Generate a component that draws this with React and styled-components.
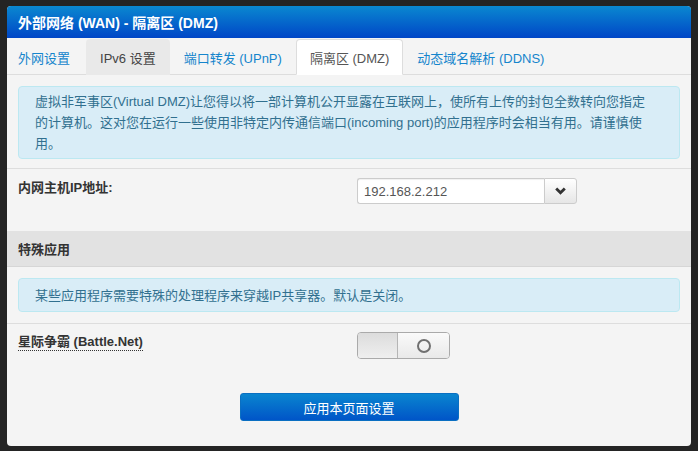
import React from "react";
import styled, { createGlobalStyle } from "styled-components";

const GlobalStyle = createGlobalStyle`
  html, body {
    margin: 0;
    padding: 0;
    background: #242424;
    font-family: "Liberation Sans", "Noto Sans CJK SC", sans-serif;
    font-size: 13px;
    color: #333;
  }
`;

const Page = styled.div`
  padding: 6px 7px 5px 7px;
`;

const Panel = styled.div`
  width: 684px;
  height: 440px;
  background: #f4f4f4;
  border-radius: 4px;
  overflow: hidden;
  display: flex;
  flex-direction: column;
`;

const Header = styled.div`
  height: 32px;
  display: flex;
  align-items: center;
  padding: 0 11px;
  background: linear-gradient(to bottom, #0a88d0, #0046c7);
  color: #fff;
  font-size: 14px;
  font-weight: bold;
`;

const TabBar = styled.div`
  display: flex;
  height: 36px;
  padding-left: 11px;
  border-bottom: 1px solid #ddd;
`;

const Tab = styled.div`
  display: flex;
  align-items: center;
  padding: 0 ${(p) => (p.$first ? "15px 0 0" : "13px")};
  margin-top: 1px;
  margin-bottom: -1px;
  border: 1px solid ${(p) => (p.$active ? "#ddd" : "transparent")};
  border-bottom-color: ${(p) => (p.$active ? "#fff" : "transparent")};
  border-left-width: ${(p) => (p.$first ? "0" : "1px")};
  border-radius: 4px 4px 0 0;
  background: ${(p) => (p.$active ? "#fff" : p.$hover ? "#e9e9e9" : "transparent")};
  color: ${(p) => (p.$active ? "#555" : p.$hover ? "#444" : "#1585cc")};
  font-size: 13px;
`;

const Section = styled.div`
  padding: ${(p) => p.$pad || "0 11px"};
  border-top: ${(p) => (p.$line ? "1px solid #ddd" : "none")};
`;

const Info = styled.div`
  background: #d9edf7;
  border: 1px solid #bce8f1;
  border-radius: 4px;
  color: #31708f;
  padding: ${(p) => p.$pad || "4px 30px 4px 16px"};
  line-height: 21px;
  font-size: 13px;
`;

const Row = styled.div`
  display: grid;
  grid-template-columns: 339px 1fr;
  align-items: start;
  padding: ${(p) => p.$pad};
`;

const Label = styled.div`
  font-weight: bold;
  font-size: 13px;
  line-height: 20px;
  color: #333;
`;

const Dotted = styled.span`
  border-bottom: 1px dotted #333;
  padding-bottom: 1px;
`;

const Combo = styled.div`
  display: flex;
  width: 220px;
  height: 26px;
`;

const Input = styled.div`
  flex: 1;
  background: #fff;
  border: 1px solid #ccc;
  border-right: none;
  border-radius: 3px 0 0 3px;
  display: flex;
  align-items: center;
  padding-left: 6px;
  color: #555;
  font-size: 13px;
  box-shadow: inset 0 1px 1px rgba(0, 0, 0, 0.06);
`;

const DropBtn = styled.div`
  width: 31px;
  border: 1px solid #ccc;
  border-radius: 0 3px 3px 0;
  background: linear-gradient(to bottom, #fff, #e6e6e6);
  display: flex;
  align-items: center;
  justify-content: center;
`;

const GroupHead = styled.div`
  height: 35px;
  display: flex;
  align-items: center;
  padding: 0 11px;
  background: #e2e2e2;
  border-bottom: 1px solid #d6d6d6;
  font-weight: bold;
  font-size: 13px;
`;

const Toggle = styled.div`
  display: flex;
  width: 93px;
  height: 27px;
  box-sizing: border-box;
  border: 1px solid #aaa;
  border-radius: 4px;
  overflow: hidden;
`;

const ToggleOff = styled.div`
  width: 39px;
  background: linear-gradient(to bottom, #dcdcdc, #efefef);
  border-right: 1px solid #b5b5b5;
`;

const ToggleOn = styled.div`
  flex: 1;
  background: linear-gradient(to bottom, #fafafa, #e9e9e9);
  display: flex;
  align-items: center;
  justify-content: center;
`;

const Ring = styled.div`
  width: 10px;
  height: 10px;
  border: 2px solid #707070;
  border-radius: 50%;
`;

const Footer = styled.div`
  display: flex;
  justify-content: center;
  padding: 34px 0 0 0;
`;

const Apply = styled.button`
  width: 219px;
  height: 28px;
  border: 1px solid #0a6fc2;
  border-radius: 3px;
  background: linear-gradient(to bottom, #0a85cf, #0055c8);
  color: #fff;
  font-family: inherit;
  font-size: 13px;
  padding: 0;
`;

const Chevron = () => (
  <svg width="11" height="8" viewBox="0 0 11 8">
    <path d="M1.2 1.5 L5.5 5.8 L9.8 1.5" fill="none" stroke="#333" strokeWidth="2.8" />
  </svg>
);

export default function App() {
  return (
    <>
      <GlobalStyle />
      <Page>
        <Panel>
          <Header>外部网络 (WAN) - 隔离区 (DMZ)</Header>
          <TabBar>
            <Tab $first>外网设置</Tab>
            <Tab $hover>IPv6 设置</Tab>
            <Tab>端口转发 (UPnP)</Tab>
            <Tab $active>隔离区 (DMZ)</Tab>
            <Tab>动态域名解析 (DDNS)</Tab>
          </TabBar>
          <Section $pad="11px 11px 9px 11px">
            <Info>
              虚拟非军事区(Virtual DMZ)让您得以将一部计算机公开显露在互联网上，使所有上传的封包全数转向您指定的计算机。这对您在运行一些使用非特定内传通信端口(incoming port)的应用程序时会相当有用。请谨慎使用。
            </Info>
          </Section>
          <Section $line $pad="0">
            <Row $pad="9px 11px 27px 11px">
              <Label>内网主机IP地址:</Label>
              <Combo>
                <Input>192.168.2.212</Input>
                <DropBtn>
                  <Chevron />
                </DropBtn>
              </Combo>
            </Row>
          </Section>
          <GroupHead>特殊应用</GroupHead>
          <Section $pad="11px 11px 11px 11px">
            <Info $pad="6px 16px 5px 16px">某些应用程序需要特殊的处理程序来穿越IP共享器。默认是关闭。</Info>
          </Section>
          <Section $line $pad="0">
            <Row $pad="8px 11px 0 11px">
              <Label>
                <Dotted>星际争霸 (Battle.Net)</Dotted>
              </Label>
              <Toggle>
                <ToggleOff />
                <ToggleOn>
                  <Ring />
                </ToggleOn>
              </Toggle>
            </Row>
          </Section>
          <Footer>
            <Apply>应用本页面设置</Apply>
          </Footer>
        </Panel>
      </Page>
    </>
  );
}
